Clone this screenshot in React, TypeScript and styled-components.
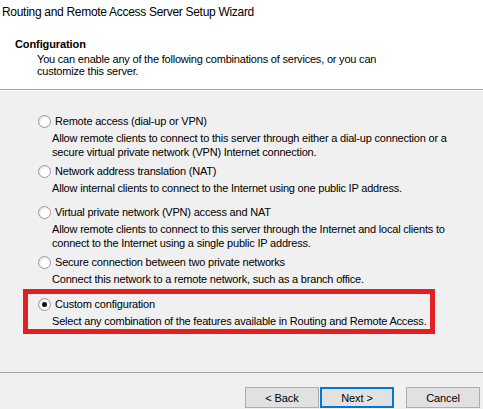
import { FC } from "react";
import { styled, createGlobalStyle } from "styled-components";

const GlobalStyle = createGlobalStyle`
  html, body {
    margin: 0;
    padding: 0;
    background: #f0f0f0;
  }
  body {
    width: 483px;
    height: 409px;
    overflow: hidden;
    font-family: "Liberation Sans", Arial, sans-serif;
    font-size: 11px;
    letter-spacing: -0.2px;
    color: #000;
  }
`;

const Wizard = styled.div`
  display: flex;
  flex-direction: column;
  width: 483px;
  height: 409px;
  background: #f0f0f0;
`;

const Header = styled.header`
  height: 90px;
  background: #fff;
  border-bottom: 1px solid #a0a0a0;
  box-shadow: 0 1px 0 #fff;
  box-sizing: border-box;
  padding: 4px 0 0 2px;
`;

const WindowTitle = styled.div`
  font-size: 12px;
  line-height: 16px;
  letter-spacing: -0.3px;
`;

const PageTitle = styled.h1`
  margin: 18px 0 0 13px;
  font-size: 11px;
  font-weight: 700;
  line-height: 13px;
  letter-spacing: -0.1px;
`;

const PageSubtitle = styled.p`
  margin: 2px 0 0 35px;
  width: 360px;
  line-height: 12px;
`;

const Body = styled.main`
  position: relative;
  flex: 1;
  padding: 25px 0 0 38px;
  box-sizing: border-box;
`;

const OptionList = styled.div`
  display: flex;
  flex-direction: column;
`;

const Option = styled.div<{ $height: number }>`
  height: ${(p) => p.$height}px;
`;

const OptionLabel = styled.label`
  display: flex;
  align-items: center;
  gap: 4px;
  height: 13px;
  line-height: 13px;
`;

const Radio = styled.span<{ $checked?: boolean }>`
  position: relative;
  width: 11px;
  height: 11px;
  border-radius: 50%;
  border: 1px solid #9a9a9a;
  background: radial-gradient(circle at 60% 60%, #ffffff 40%, #e6e6e6 75%, #cfcfcf 100%);
  flex-shrink: 0;

  &::after {
    content: "";
    display: ${(p) => (p.$checked ? "block" : "none")};
    position: absolute;
    left: 3px;
    top: 3px;
    width: 5px;
    height: 5px;
    border-radius: 50%;
    background: #111;
  }
`;

const OptionDescription = styled.p`
  margin: 4px 0 0 14px;
  width: 402px;
  line-height: 13.5px;
`;

const Highlight = styled.div`
  position: absolute;
  left: 23px;
  top: 199px;
  width: 412px;
  height: 45px;
  border: 5px solid #e41f22;
  box-sizing: border-box;
  pointer-events: none;
`;

const Footer = styled.footer`
  display: flex;
  justify-content: flex-end;
  align-items: flex-start;
  height: 37px;
  padding: 14px 3px 0 0;
  box-sizing: border-box;
  border-top: 1px solid #a0a0a0;
`;

const Button = styled.button<{ $primary?: boolean; $spaced?: boolean }>`
  width: 74px;
  height: 21px;
  margin-left: ${(p) => (p.$spaced ? 12 : 1)}px;
  padding: 0;
  font-family: inherit;
  font-size: 11px;
  letter-spacing: -0.1px;
  color: #000;
  background: #e1e1e1;
  border: ${(p) => (p.$primary ? "2px solid #0078d7" : "1px solid #adadad")};
  box-sizing: border-box;
`;

type WizardOption = {
  label: string;
  description: string;
  height: number;
  checked?: boolean;
};

const options: WizardOption[] = [
  {
    label: "Remote access (dial-up or VPN)",
    description:
      "Allow remote clients to connect to this server through either a dial-up connection or a secure virtual private network (VPN) Internet connection.",
    height: 50,
  },
  {
    label: "Network address translation (NAT)",
    description: "Allow internal clients to connect to the Internet using one public IP address.",
    height: 41,
  },
  {
    label: "Virtual private network (VPN) access and NAT",
    description:
      "Allow remote clients to connect to this server through the Internet and local clients to connect to the Internet using a single public IP address.",
    height: 50,
  },
  {
    label: "Secure connection between two private networks",
    description: "Connect this network to a remote network, such as a branch office.",
    height: 42,
  },
  {
    label: "Custom configuration",
    description: "Select any combination of the features available in Routing and Remote Access.",
    height: 30,
    checked: true,
  },
];

const App: FC = () => {
  return (
    <Wizard>
      <GlobalStyle />
      <Header>
        <WindowTitle>Routing and Remote Access Server Setup Wizard</WindowTitle>
        <PageTitle>Configuration</PageTitle>
        <PageSubtitle>
          You can enable any of the following combinations of services, or you can customize this server.
        </PageSubtitle>
      </Header>
      <Body>
        <OptionList>
          {options.map((option) => (
            <Option key={option.label} $height={option.height}>
              <OptionLabel>
                <Radio $checked={option.checked} />
                {option.label}
              </OptionLabel>
              <OptionDescription>{option.description}</OptionDescription>
            </Option>
          ))}
        </OptionList>
        <Highlight />
      </Body>
      <Footer>
        <Button type="button">&lt; Back</Button>
        <Button type="button" $primary>
          Next &gt;
        </Button>
        <Button type="button" $spaced>
          Cancel
        </Button>
      </Footer>
    </Wizard>
  );
};

export default App;
